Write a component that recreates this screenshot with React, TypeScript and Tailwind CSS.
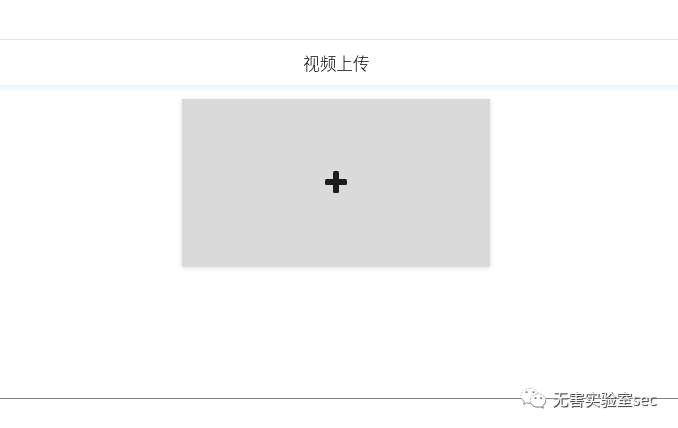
function WeChatMark() {
  return (
    <svg
      viewBox="0 0 28 24"
      className="h-6 w-7 shrink-0"
      fill="#fff"
      strokeWidth="0.8"
      strokeLinejoin="round"
    >
      <path d="M10 1.500C4.800 1.500 1 4.700 1 8.800c0 2.500 1.300 4.500 3.400 5.800L3.600 17.500l3.100-1.700c1 .3 2.100.4 3.300.4 5 0 9-3.300 9-7.400S15 1.500 10 1.500Z" strokeDasharray="1.500 1.500" stroke="#bbb" />
      <path d="M1.500 11.500q1 2 2.900 3.100L3.600 17.500l3.100-1.700q1.500.5 3.500.4" fill="none" stroke="#888" />
      <path d="M18 6.800c-4.400 0-7.700 2.900-7.700 6.700 0 3.700 3.300 6.700 7.700 6.700 1 0 1.900-.2 2.700-.4l2.600 1.400-.7-2.300c2-1.300 3.100-3.200 3.100-5.400 0-3.800-3.300-6.700-7.700-6.700Z" stroke="#aaa" strokeDasharray="3 1" />
      <path d="M10.500 15.500c.9 2.700 3.800 4.700 7.500 4.700 1 0 1.900-.2 2.700-.4l2.600 1.400-.7-2.300c2-1.300 3.100-3.200 3.100-5.400" fill="none" stroke="#777" />
      <path d="M5.500 5.200h2M12.500 5.200h2M14.500 11.200h2M20 11.200h2" fill="none" stroke="#555" strokeWidth="1.200" />
    </svg>
  );
}

export default function App() {
  return (
    <div className="relative flex h-[428px] w-[678px] flex-col overflow-hidden bg-white font-['Noto_Sans_CJK_SC',sans-serif]">
      <div className="h-[39px] shrink-0" />
      <header className="flex h-[46px] shrink-0 items-center justify-center border-t border-[#e4e4e4] pr-[5px]">
        <h1 className="text-[16.700px] leading-6 font-light text-black will-change-transform">视频上传</h1>
      </header>
      <div className="h-[7px] shrink-0 bg-linear-to-b from-[#e8f3fd] to-white" />
      <main className="flex h-[307px] shrink-0 justify-center border-b border-[#808080] pt-[7px] pr-[6px]">
        <button
          aria-label="视频上传"
          className="flex h-[168px] w-[308px] items-center justify-center bg-[#dadada] pb-[2px] shadow-[0_1px_5px_rgba(0,0,0,0.13)]"
        >
          <svg viewBox="0 0 22 22" className="h-[22px] w-[22px]" fill="#1c1c1c">
            <rect x="8" y="0" width="6" height="22" rx="1.500" />
            <rect x="0" y="8" width="22" height="6" rx="1.500" />
          </svg>
        </button>
      </main>
      <div className="absolute top-[387px] left-[520px] flex h-6 items-center gap-1 will-change-transform">
        <WeChatMark />
        <span className="-mt-[2px] text-[16px] leading-6 whitespace-nowrap text-white [text-shadow:1px_1px_1px_#444,1px_1px_0_#888]">
          无害实验室sec
        </span>
      </div>
    </div>
  );
}
